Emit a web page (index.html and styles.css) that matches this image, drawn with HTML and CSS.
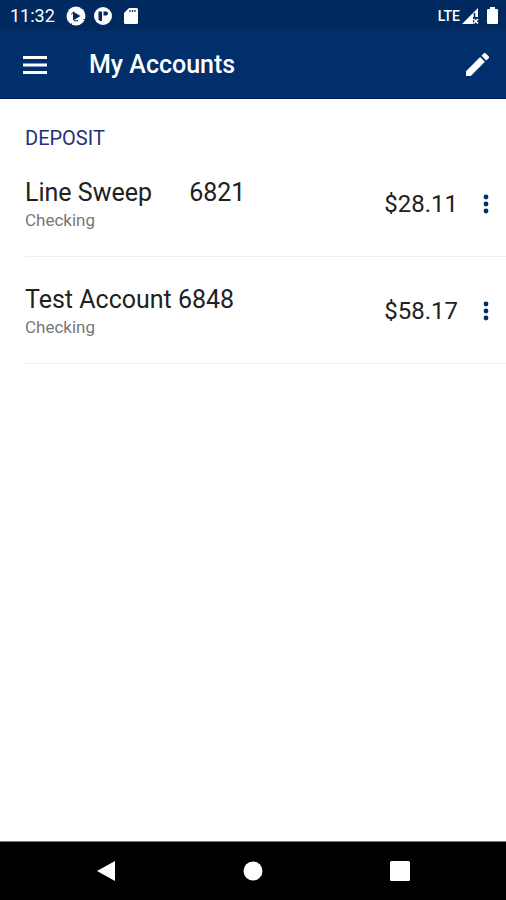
FILE: index.html
```html
<!DOCTYPE html>
<html lang="en">
<head>
    <meta charset="UTF-8">
    <meta name="viewport" content="width=device-width, initial-scale=1.0">
    <title>My Accounts</title>
    <link rel="stylesheet" href="styles.css">
</head>
<body>
    <div class="status-bar">
        <span class="time">11:32</span>
        <div class="notifications">
            <svg width="20" height="20" viewBox="0 0 20 20">
                <circle cx="10" cy="10" r="9.500" fill="#fff"/>
                <path d="M7 5.500v9l7.500-4.500z" fill="#00295f"/>
                <path d="M5.500 8.500a5 5 0 0 1 2-2.500M8 14.500a5 5 0 0 0 4 0" fill="none" stroke="#00295f" stroke-width="1"/>
                <path d="M.5 5l2 1M16 .5l-1 2M19.500 14l-2-.5M5 19.500l.5-2" stroke="#00295f" stroke-width="1"/>
            </svg>
            <svg width="18" height="18" viewBox="0 0 18 18">
                <circle cx="9" cy="9" r="9" fill="#fff"/>
                <path d="M4.500 4.500H8V14H6l-1.500-1.500z" fill="#00295f"/>
                <path d="M9.500 4.500H12q2 0 2 2t-2 2H9.500z" fill="#00295f"/>
            </svg>
            <svg class="sd-card" width="14" height="16" viewBox="0 0 14 16">
                <path d="M5 0h7.500Q14 0 14 1.500v13q0 1.500-1.500 1.500h-11Q0 16 0 14.500V5z" fill="#fff"/>
                <path d="M6 2v2M8.500 2v2M11 2v2" stroke="#00295f" stroke-width="1.200"/>
            </svg>
        </div>
        <div class="signal">
            <span class="network">LTE</span>
            <svg width="17" height="16" viewBox="0 0 17 16">
                <path d="M0 16L16 0v9h-5v7z" fill="#fff"/>
                <path d="M12.500 5v5" stroke="#00295f" stroke-width="1.500"/>
                <path d="M11.500 11l4.500 4.500M16 11l-4.500 4.500" stroke="#fff" stroke-width="1.600"/>
            </svg>
            <svg class="battery" width="11" height="17" viewBox="0 0 11 17">
                <path d="M3 0h5v2h2q1 0 1 1v13q0 1-1 1H1q-1 0-1-1V3q0-1 1-1h2z" fill="#fff"/>
            </svg>
        </div>
    </div>

    <header class="app-bar">
        <button class="icon-button" aria-label="Menu">
            <svg width="24" height="18" viewBox="0 0 24 18">
                <path d="M0 1.500h24M0 9h24M0 16.500h24" stroke="#fff" stroke-width="2.800"/>
            </svg>
        </button>
        <h1 class="title">My Accounts</h1>
        <button class="icon-button" aria-label="Edit accounts">
            <svg width="23" height="23" viewBox="3 3 18 18">
                <path d="M3 17.250V21h3.750L17.810 9.940l-3.750-3.750zM20.710 7.040a1 1 0 0 0 0-1.410l-2.340-2.340a1 1 0 0 0-1.410 0l-1.830 1.830 3.750 3.750z" fill="#fff"/>
            </svg>
        </button>
    </header>

    <main class="accounts">
        <h2 class="section-title">DEPOSIT</h2>
        <ul class="account-list">
            <li class="account">
                <div class="account-info">
                    <span class="account-name">Line Sweep      6821</span>
                    <span class="account-type">Checking</span>
                </div>
                <span class="balance">$28.11</span>
                <button class="more-button" aria-label="More options">
                    <svg width="6" height="20" viewBox="0 0 6 20">
                        <circle cx="3" cy="3" r="2.400"/>
                        <circle cx="3" cy="10" r="2.400"/>
                        <circle cx="3" cy="17" r="2.400"/>
                    </svg>
                </button>
            </li>
            <li class="account">
                <div class="account-info">
                    <span class="account-name">Test Account 6848</span>
                    <span class="account-type">Checking</span>
                </div>
                <span class="balance">$58.17</span>
                <button class="more-button" aria-label="More options">
                    <svg width="6" height="20" viewBox="0 0 6 20">
                        <circle cx="3" cy="3" r="2.400"/>
                        <circle cx="3" cy="10" r="2.400"/>
                        <circle cx="3" cy="17" r="2.400"/>
                    </svg>
                </button>
            </li>
        </ul>
    </main>

    <nav class="nav-bar">
        <button class="nav-button" aria-label="Back">
            <svg width="20" height="20" viewBox="0 0 20 20"><path d="M1 10L19 0v20z" fill="#fff"/></svg>
        </button>
        <button class="nav-button" aria-label="Home">
            <svg width="20" height="20" viewBox="0 0 20 20"><circle cx="10" cy="10" r="9.500" fill="#fff"/></svg>
        </button>
        <button class="nav-button" aria-label="Recent apps">
            <svg width="20" height="20" viewBox="0 0 20 20"><rect width="20" height="20" rx="1.500" fill="#fff"/></svg>
        </button>
    </nav>
</body>
</html>
```
FILE: styles.css
```css
* {
    box-sizing: border-box;
}

body {
    margin: 0;
    min-height: 100vh;
    display: flex;
    flex-direction: column;
    font-family: Roboto, sans-serif;
    background-color: #fff;
    color: #212121;
}

button {
    padding: 0;
    border: none;
    background: none;
    cursor: pointer;
}

svg {
    display: block;
}

.status-bar {
    display: flex;
    align-items: center;
    height: 31px;
    padding: 0 8px 0 10px;
    background-color: #00295f;
    color: #fff;
}

.time {
    font-size: 18px;
}

.notifications {
    display: flex;
    align-items: center;
    gap: 8px;
    margin-left: 11px;
}

.sd-card {
    margin-left: 4px;
}

.signal {
    display: flex;
    align-items: center;
    gap: 2px;
    margin-left: auto;
}

.network {
    font-size: 14px;
    font-weight: 500;
}

.battery {
    margin-left: 6px;
}

.app-bar {
    display: flex;
    align-items: center;
    height: 68px;
    padding: 0 17px 0 23px;
    background-color: #002f6c;
    border-bottom: 1px solid #00185a;
    color: #fff;
}

.title {
    flex: 1;
    margin: 0 0 0 42px;
    font-size: 25px;
    font-weight: 500;
    line-height: 32px;
}

.accounts {
    flex: 1;
    padding: 27px 0 0 25px;
}

.section-title {
    margin: 0;
    font-size: 20px;
    font-weight: 400;
    line-height: 24px;
    color: #22307c;
}

.account-list {
    margin: 0;
    padding: 0;
    list-style: none;
}

.account {
    display: flex;
    align-items: center;
    padding: 24px 9px 23px 0;
    border-bottom: 1px solid #eee;
}

.account-info {
    flex: 1;
    display: flex;
    flex-direction: column;
    padding-top: 5px;
}

.account-name {
    font-size: 25px;
    line-height: 28px;
    white-space: pre;
}

.account-type {
    font-size: 17px;
    line-height: 26px;
    color: #777;
}

.balance {
    font-size: 24px;
}

.more-button {
    width: 22px;
    margin-left: 17px;
    fill: #002f6c;
}

.more-button svg {
    margin: 0 auto;
}

.nav-bar {
    display: flex;
    height: 59px;
    padding: 0 32px;
    background-color: #000;
    border-top: 1px solid #777;
}

.nav-button {
    flex: 1;
}

.nav-button svg {
    margin: 0 auto;
}
```
